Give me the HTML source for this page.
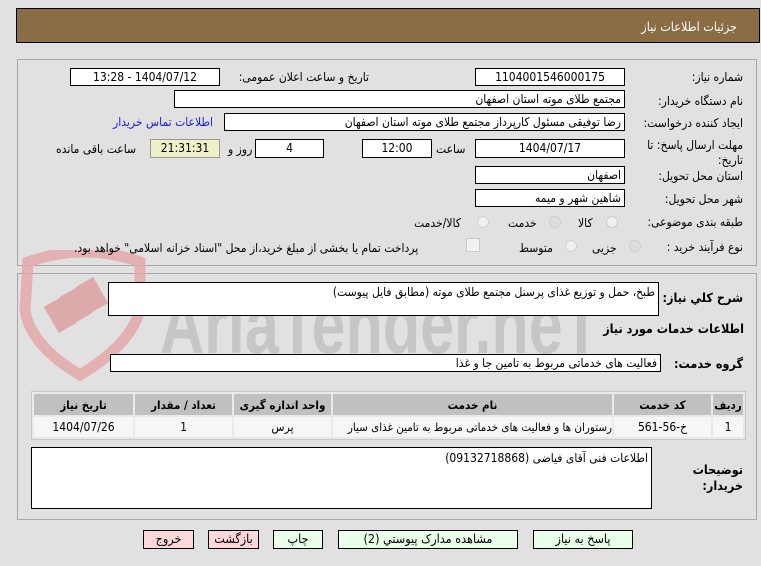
<!DOCTYPE html>
<html><head><meta charset="utf-8"><style>
body{margin:0;width:761px;height:566px;background:#e1e1e1;font-family:"DejaVu Sans Condensed","DejaVu Sans",sans-serif;font-stretch:condensed;font-size:12px;color:#000;position:relative;overflow:hidden;direction:rtl}
.a{position:absolute;white-space:nowrap}
.box{position:absolute;background:#fff;border:1px solid #000;box-sizing:border-box;padding:0 3px;line-height:16px;text-align:right;overflow:hidden;white-space:nowrap}
.c{text-align:center}
.lbl{position:absolute;white-space:nowrap;text-align:right}
.panel{position:absolute;border:1px solid #a8a8a8;box-sizing:border-box}
.rad{position:absolute;width:12px;height:12px;border-radius:50%;border:1px solid #cfcfcf;background:#f0f0f0;box-sizing:border-box}
.btn{position:absolute;border:1px solid #000;box-sizing:border-box;text-align:center;line-height:16px;top:530px;height:19px;font-size:12.5px}
table{position:absolute;border-collapse:separate;border-spacing:2px;background:#e9e9e9;border:1px solid #c8c8c8;table-layout:fixed}
th{background:#c0c0c0;height:21px;font-weight:bold;font-size:11.5px;padding:0;white-space:nowrap}
td{background:#f6f6f6;height:20px;text-align:center;padding:0;white-space:nowrap;overflow:hidden}
</style></head><body>
<div class="a" style="left:16px;top:8px;width:744px;height:35px;background:#8a6c45;border:1px solid #000;box-sizing:border-box"></div>
<div class="a" style="right:24px;top:19px;color:#fff;font-size:12.5px">جزئیات اطلاعات نیاز</div>

<div class="panel" style="left:17px;top:59px;width:740px;height:207px"></div>
<div class="panel" style="left:17px;top:273px;width:740px;height:247px"></div>

<svg class="a" style="left:0;top:250px" width="620" height="140">
<path d="M28 12 Q85 -8 140 12 L140 60 Q130 95 80 125 Q30 95 25 60 Z" fill="none" stroke="#e3a8a8" stroke-width="11" opacity="0.85"/>
<rect x="50" y="50" width="20" height="30" fill="#dcaaaa" transform="rotate(-30 60 65)"/>
<rect x="66" y="40" width="20" height="30" fill="#dcaaaa" transform="rotate(-30 76 55)"/>
<rect x="82" y="30" width="20" height="30" fill="#dcaaaa" transform="rotate(-30 92 45)"/>
<text x="160" y="103" font-family="Liberation Sans Narrow,Liberation Sans,sans-serif" font-size="82" font-weight="bold" fill="#c6c6c6" textLength="440" lengthAdjust="spacingAndGlyphs" direction="ltr">AriaTender.neT</text>
</svg>

<div class="lbl" style="right:18px;top:70px">شماره نیاز:</div>
<div class="box c" style="left:475px;top:68px;width:150px;height:18px">1104001546000175</div>
<div class="lbl" style="right:392px;top:70px">تاریخ و ساعت اعلان عمومی:</div>
<div class="box c" style="left:70px;top:68px;width:150px;height:18px">1404/07/12 - 13:28</div>

<div class="lbl" style="right:18px;top:94px">نام دستگاه خریدار:</div>
<div class="box" style="left:174px;top:90px;width:451px;height:18px">مجتمع طلای موته استان اصفهان</div>

<div class="lbl" style="right:18px;top:116px">ایجاد کننده درخواست:</div>
<div class="box" style="left:224px;top:113px;width:401px;height:18px">رضا توفیقی مسئول کارپرداز مجتمع طلای موته استان اصفهان</div>
<div class="a" style="left:113px;top:115px;color:#2020d0">اطلاعات تماس خریدار</div>

<div class="lbl" style="right:18px;top:138px;line-height:15px;text-align:right">مهلت ارسال پاسخ: تا<br>تاریخ:</div>
<div class="box c" style="left:475px;top:139px;width:150px;height:19px">1404/07/17</div>
<div class="a" style="left:436px;top:142px">ساعت</div>
<div class="box c" style="left:362px;top:139px;width:70px;height:19px">12:00</div>
<div class="box c" style="left:255px;top:139px;width:69px;height:19px">4</div>
<div class="a" style="left:228px;top:142px">روز و</div>
<div class="box c" style="left:150px;top:139px;width:70px;height:19px;background:#efefc8;border-color:#999">21:31:31</div>
<div class="a" style="left:56px;top:142px">ساعت باقی مانده</div>

<div class="lbl" style="right:18px;top:169px">استان محل تحویل:</div>
<div class="box" style="left:475px;top:166px;width:150px;height:18px">اصفهان</div>
<div class="lbl" style="right:18px;top:192px">شهر محل تحویل:</div>
<div class="box" style="left:475px;top:189px;width:150px;height:18px">شاهین شهر و میمه</div>

<div class="lbl" style="right:18px;top:215px">طبقه بندی موضوعی:</div>
<div class="rad" style="left:606px;top:216px"></div><div class="a" style="left:578px;top:216px">کالا</div>
<div class="rad" style="left:549px;top:216px;background:#ddd"></div><div class="a" style="left:508px;top:216px">خدمت</div>
<div class="rad" style="left:477px;top:216px"></div><div class="a" style="left:414px;top:216px">کالا/خدمت</div>

<div class="lbl" style="right:18px;top:240px">نوع فرآیند خرید :</div>
<div class="rad" style="left:629px;top:240px;background:#ddd"></div><div class="a" style="left:592px;top:241px">جزیی</div>
<div class="rad" style="left:565px;top:240px"></div><div class="a" style="left:519px;top:241px">متوسط</div>
<div class="a" style="left:466px;top:238px;width:12px;height:12px;border:1px solid #ccc;background:#f2f2f2"></div>
<div class="a" style="left:74px;top:241px">پرداخت تمام یا بخشی از مبلغ خرید،از محل "اسناد خزانه اسلامی" خواهد بود.</div>

<div class="lbl" style="right:18px;top:290px;font-weight:bold;font-size:12.5px">شرح کلي نیاز:</div>
<div class="box" style="left:108px;top:282px;width:551px;height:34px;line-height:18px">طبخ، حمل و توزیع غذای پرسنل مجتمع طلای موته (مطابق فایل پیوست)</div>
<div class="lbl" style="right:17px;top:321px;font-weight:bold;font-size:12.5px">اطلاعات خدمات مورد نیاز</div>
<div class="lbl" style="right:18px;top:356px;font-weight:bold;font-size:12.5px">گروه خدمت:</div>
<div class="box" style="left:110px;top:354px;width:551px;height:18px">فعالیت های خدماتی مربوط به تامین جا و غذا</div>

<table style="left:31px;top:391px;width:715px">
<tr><th style="width:30px">ردیف</th><th style="width:97px">کد خدمت</th><th>نام خدمت</th><th style="width:97px">واحد اندازه گیری</th><th style="width:97px">تعداد / مقدار</th><th style="width:99px">تاریخ نیاز</th></tr>
<tr><td>1</td><td>خ-56-561</td><td style="text-align:right;font-size:11.5px">رستوران ها و فعالیت های خدماتی مربوط به تامین غذای سیار</td><td>پرس</td><td>1</td><td>1404/07/26</td></tr>
</table>

<div class="lbl" style="right:18px;top:462px;font-weight:bold;font-size:12.5px;line-height:16px">توضیحات<br>خریدار:</div>
<div class="box" style="left:31px;top:447px;width:621px;height:62px;line-height:20px">اطلاعات فنی آقای فیاضی (09132718868)</div>

<div class="btn" style="left:143px;width:51px;background:#fdd8d8">خروج</div>
<div class="btn" style="left:208px;width:51px;background:#fdd8d8">بازگشت</div>
<div class="btn" style="left:273px;width:50px;background:#eaffea">چاپ</div>
<div class="btn" style="left:338px;width:180px;background:#eaffea">مشاهده مدارک پیوستي (2)</div>
<div class="btn" style="left:533px;width:100px;background:#eaffea">پاسخ به نیاز</div>
</body></html>
